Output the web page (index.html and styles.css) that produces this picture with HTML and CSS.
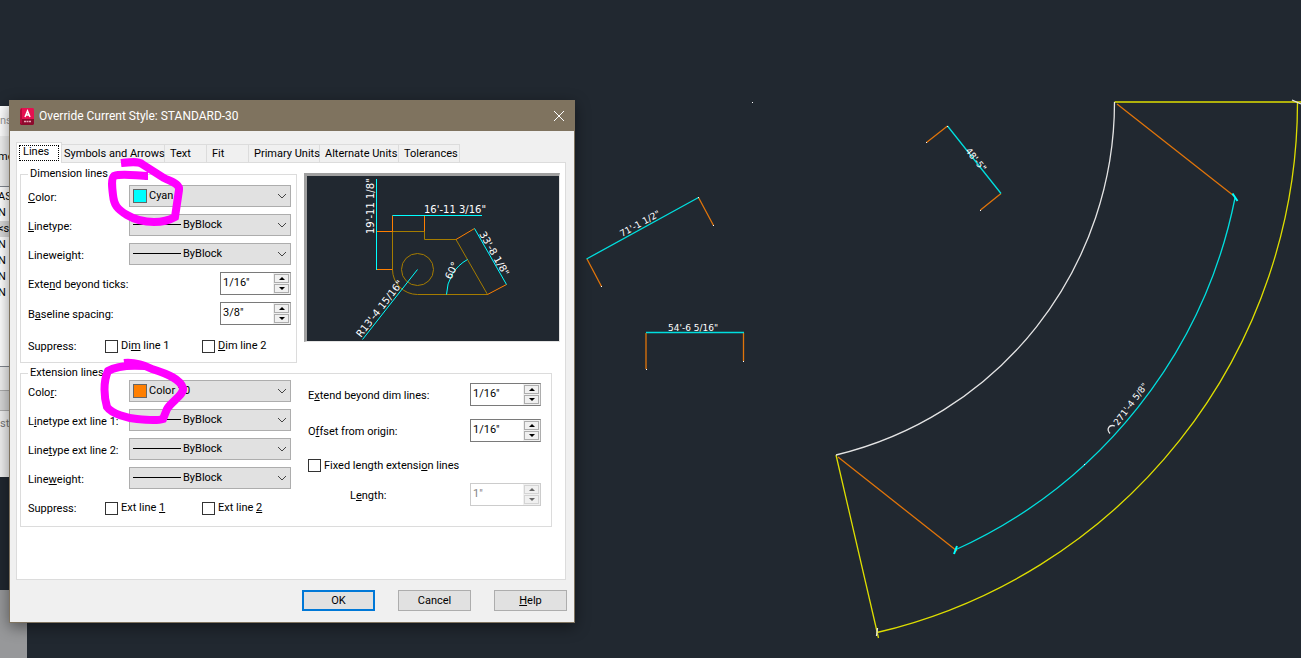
FILE: index.html
```html
<!DOCTYPE html>
<html lang="en">
<head>
  <meta charset="UTF-8">
  <meta name="viewport" content="width=device-width, initial-scale=1.0">
  <title>Override Current Style: STANDARD-30</title>
  <link rel="stylesheet" href="styles.css">
</head>
<body>
  <main class="workspace">
    <!-- Model space drawing -->
    <svg class="drawing" viewBox="0 0 1301 658" preserveAspectRatio="xMinYMin slice">
      <g class="ext">
        <path d="M587 259L601.500 286.500M698.500 197.500L713.500 225.500"/>
        <path d="M646 333V369M743.500 333V361"/>
        <path d="M947.500 126L926.500 142.500M1001 193.500L980.500 210"/>
        <path d="M1117 104L1234 196M838 457L957 551"/>
      </g>
      <g class="dim">
        <path d="M586.500 259L698.500 197.500M646 332.500H744M947.500 126L1001 193.500"/>
        <path d="M1235 198A492 492 0 0 1 955 550"/>
        <path class="tick" d="M1232.500 193.500L1237.500 201M957 546L954 554"/>
      </g>
      <g class="outline">
        <path d="M1114.500 102H1301M1297.500 102A545 545 0 0 1 877 632.500M836 455L878.500 638"/>
      </g>
      <g class="white">
        <path d="M1114.500 102A363 363 0 0 1 836 455"/>
        <path d="M1292 100L1301 104M877.500 628L876.500 636"/>
        <path d="M1110 433.500C1106 429 1109 424 1115 426"/>
      </g>
      <g class="point">
        <path d="M752 102.500h1M601 286.500h1M713 225.500h1M698 197.500h1M646 369.500h1M743 361.500h1M926 142.500h1M947 126.500h1M980 210.500h1M1084 464.500h1"/>
      </g>
      <g class="dim-text">
        <text transform="translate(622 237) rotate(-29)">71'-1 1/2"</text>
        <text x="668" y="331">54'-6 5/16"</text>
        <text transform="translate(965 151) rotate(51)">48'-5"</text>
        <text transform="translate(1118 426) rotate(-53)">271'-4 5/8"</text>
      </g>
    </svg>

    <!-- Dimension style manager, behind the dialog -->
    <section class="manager">
      <div class="manager-title">ns</div>
      <div class="manager-label">me</div>
      <ul class="manager-list">
        <li>AS</li>
        <li>N</li>
        <li class="current">&lt;st</li>
        <li>N</li>
        <li>N</li>
        <li>N</li>
        <li>N</li>
      </ul>
      <div class="manager-scroll"></div>
      <div class="manager-button"></div>
      <div class="manager-note">st</div>
    </section>
    <div class="corner"></div>

    <form class="dialog">
      <header class="titlebar">
        <svg class="logo" width="14" height="17" viewBox="0 0 14 17">
          <path class="logo-face" d="M1 0H13L14 1V11H0V2Z"/>
          <path class="logo-base" d="M0 11H14V16L13 17H1L0 16Z"/>
          <path class="logo-side" d="M0 2L2 0V16L0 15Z"/>
          <path class="logo-mark" d="M5 9L7.500 3L10 9M6 7H9"/>
          <path class="logo-word" d="M4 13.500H11"/>
        </svg>
        <h1>Override Current Style: STANDARD-30</h1>
        <button type="button" class="close" aria-label="Close">
          <svg width="12" height="12" viewBox="0 0 12 12"><path d="M1 1L11 11M11 1L1 11"/></svg>
        </button>
      </header>

      <nav class="tabs">
        <button type="button" class="tab active"><span>Lines</span></button>
        <button type="button" class="tab symbols">Symbols and Arrows</button>
        <button type="button" class="tab short">Text</button>
        <button type="button" class="tab short">Fit</button>
        <button type="button" class="tab primary">Primary Units</button>
        <button type="button" class="tab alternate">Alternate Units</button>
        <button type="button" class="tab tolerances">Tolerances</button>
      </nav>

      <div class="panel">
        <div class="top">
          <fieldset class="dimension">
            <legend>Dimension lines</legend>
            <div class="row">
              <label for="dimColor"><u>C</u>olor:</label>
              <div class="combo color">
                <select id="dimColor"><option>Cyan</option></select>
                <span class="swatch cyan"></span>
                <svg class="arrow" viewBox="0 0 10 6"><path d="M1 1L5 5L9 1"/></svg>
              </div>
            </div>
            <div class="row">
              <label for="dimType"><u>L</u>inetype:</label>
              <div class="combo line">
                <select id="dimType"><option>ByBlock</option></select>
                <svg class="arrow" viewBox="0 0 10 6"><path d="M1 1L5 5L9 1"/></svg>
              </div>
            </div>
            <div class="row">
              <label for="dimWeight">Linewei<u>g</u>ht:</label>
              <div class="combo line">
                <select id="dimWeight"><option>ByBlock</option></select>
                <svg class="arrow" viewBox="0 0 10 6"><path d="M1 1L5 5L9 1"/></svg>
              </div>
            </div>
            <div class="row">
              <label for="ticks">Exte<u>n</u>d beyond ticks:</label>
              <div class="spinner">
                <input type="text" id="ticks" value='1/16"'>
                <div class="steps"><button type="button" class="up" aria-label="Up"></button><button type="button" class="down" aria-label="Down"></button></div>
              </div>
            </div>
            <div class="row">
              <label for="baseline">B<u>a</u>seline spacing:</label>
              <div class="spinner">
                <input type="text" id="baseline" value='3/8"'>
                <div class="steps"><button type="button" class="up" aria-label="Up"></button><button type="button" class="down" aria-label="Down"></button></div>
              </div>
            </div>
            <div class="row suppress">
              <span class="caption">Suppress:</span>
              <label class="check"><input type="checkbox"><span>Di<u>m</u> line 1</span></label>
              <label class="check"><input type="checkbox"><span><u>D</u>im line 2</span></label>
            </div>
          </fieldset>

          <div class="preview">
            <svg viewBox="0 0 252 165">
              <g class="part">
                <path d="M85.500 55.500H117.500V63.500H149L180.500 118.500H110.500A25 25 0 0 1 85.500 93.500Z"/>
                <circle cx="110.500" cy="93.500" r="16"/>
              </g>
              <g class="ext">
                <path d="M70 55.500H85.500M70 93.500H85.500M85.500 39.500V55.500M117.500 39.500V55.500M149 63.500L167.500 52.500M180.500 118.500L199.500 108.500"/>
              </g>
              <g class="dim">
                <path d="M69.500 3V94M85.500 39.500H175M167.500 52.500L199.500 108.500M160.500 83.500A41 41 0 0 0 139.500 118.500M110.500 93.500L55.500 163.500"/>
              </g>
              <g class="dim-text">
                <text transform="translate(67 58) rotate(-90)">19'-11 1/8"</text>
                <text x="117" y="37">16'-11 3/16"</text>
                <text transform="translate(172 58) rotate(60)">33'-8 1/8"</text>
                <text transform="translate(144 104) rotate(-65)">60°</text>
                <text transform="translate(54 162) rotate(-52)">R13'-4 15/16"</text>
              </g>
            </svg>
          </div>
        </div>

        <fieldset class="extension">
          <legend>Extension lines</legend>
          <div class="column">
            <div class="row">
              <label for="extColor">Colo<u>r</u>:</label>
              <div class="combo color">
                <select id="extColor"><option>Color 30</option></select>
                <span class="swatch orange"></span>
                <svg class="arrow" viewBox="0 0 10 6"><path d="M1 1L5 5L9 1"/></svg>
              </div>
            </div>
            <div class="row">
              <label for="extType1">L<u>i</u>netype ext line 1:</label>
              <div class="combo line">
                <select id="extType1"><option>ByBlock</option></select>
                <svg class="arrow" viewBox="0 0 10 6"><path d="M1 1L5 5L9 1"/></svg>
              </div>
            </div>
            <div class="row">
              <label for="extType2">Line<u>t</u>ype ext line 2:</label>
              <div class="combo line">
                <select id="extType2"><option>ByBlock</option></select>
                <svg class="arrow" viewBox="0 0 10 6"><path d="M1 1L5 5L9 1"/></svg>
              </div>
            </div>
            <div class="row">
              <label for="extWeight">Line<u>w</u>eight:</label>
              <div class="combo line">
                <select id="extWeight"><option>ByBlock</option></select>
                <svg class="arrow" viewBox="0 0 10 6"><path d="M1 1L5 5L9 1"/></svg>
              </div>
            </div>
            <div class="row suppress">
              <span class="caption">Suppress:</span>
              <label class="check"><input type="checkbox"><span>Ext line <u>1</u></span></label>
              <label class="check"><input type="checkbox"><span>Ext line <u>2</u></span></label>
            </div>
          </div>

          <div class="column offsets">
            <div class="row">
              <label for="beyond">E<u>x</u>tend beyond dim lines:</label>
              <div class="spinner">
                <input type="text" id="beyond" value='1/16"'>
                <div class="steps"><button type="button" class="up" aria-label="Up"></button><button type="button" class="down" aria-label="Down"></button></div>
              </div>
            </div>
            <div class="row">
              <label for="origin">O<u>f</u>fset from origin:</label>
              <div class="spinner">
                <input type="text" id="origin" value='1/16"'>
                <div class="steps"><button type="button" class="up" aria-label="Up"></button><button type="button" class="down" aria-label="Down"></button></div>
              </div>
            </div>
            <div class="row fixed">
              <label class="check"><input type="checkbox"><span>Fixed length extensi<u>o</u>n lines</span></label>
            </div>
            <div class="row length">
              <label for="length">L<u>e</u>ngth:</label>
              <div class="spinner disabled">
                <input type="text" id="length" value='1"' disabled>
                <div class="steps"><button type="button" class="up" aria-label="Up" disabled></button><button type="button" class="down" aria-label="Down" disabled></button></div>
              </div>
            </div>
          </div>
        </fieldset>
      </div>

      <footer class="actions">
        <button type="submit" class="default">OK</button>
        <button type="button">Cancel</button>
        <button type="button"><u>H</u>elp</button>
      </footer>
    </form>

    <!-- Marker strokes over the two colour fields -->
    <svg class="marker" width="220" height="440" viewBox="0 0 220 440">
      <path d="M121 163C130 162 138 161 142 164L164 178C172 182 180 184 179 190L175 217C168 221 162 222 154 222C142 222 132 218 127 215C117 209 114 205 113 195C112 187 111 179 114 176C122 173 137 176 148 176"/>
      <path d="M124 363C135 362 144 365 152 369C168 374 180 379 183 388C184 395 172 401 167 409L163 419C157 421 146 420 137 419C127 418 112 414 107 407C104 397 103 382 108 371C116 366 130 365 145 366"/>
    </svg>
  </main>
</body>
</html>
```
FILE: styles.css
```css
* {
  box-sizing: border-box;
}
body {
  margin: 0;
  font-family: Roboto, "Liberation Sans", sans-serif;
  font-size: 11px;
  line-height: 14px;
  color: #000;
  background-color: #212830;
}
button,
input,
select {
  font: inherit;
  color: inherit;
  margin: 0;
  padding: 0;
}
.workspace {
  position: relative;
  min-height: 100vh;
  overflow: hidden;
}

/* Drawing */
.drawing {
  position: absolute;
  width: 100%;
  height: 100%;
}
svg path,
svg circle {
  fill: none;
}
.ext {
  stroke: #e0740a;
}
.dim {
  stroke: #00dede;
}
.dim .tick {
  stroke: #00ffff;
  stroke-width: 2;
}
.outline {
  stroke: #dede00;
}
.white {
  stroke: #e4e4e4;
}
.drawing .ext,
.drawing .dim,
.drawing .outline,
.drawing .white {
  stroke-width: 1.3;
}
.point {
  stroke: #fff;
}
.dim-text {
  font-family: "DejaVu Sans", sans-serif;
  font-size: 9px;
  fill: #fff;
}

/* Window behind */
.manager {
  position: absolute;
  top: 106px;
  left: 0;
  width: 40px;
  height: 371px;
  background: #f0f0f0;
}
.manager-title {
  height: 30px;
  line-height: 30px;
  background: #fff;
  color: #999;
}
.manager-label {
  height: 50px;
  line-height: 42px;
  text-indent: -2px;
}
.manager-list {
  height: 181px;
  margin: 0;
  padding: 2px 0;
  list-style: none;
  text-indent: -2px;
  background: #fff;
  border-top: 1px solid #828790;
  border-bottom: 1px solid #828790;
}
.manager-list li {
  height: 16px;
  line-height: 16px;
}
.manager-list .current {
  background: #d9d9d9;
}
.manager-scroll {
  height: 24px;
  border-bottom: 1px solid #adadad;
}
.manager-button {
  height: 20px;
  background: #d8d8d8;
  border-bottom: 1px solid #adadad;
}
.manager-note {
  line-height: 26px;
  color: #777;
}
.corner {
  position: absolute;
  left: 0;
  bottom: 0;
  width: 27px;
  height: 68px;
  background: #97989a;
}

/* Dialog */
.dialog {
  position: absolute;
  top: 100px;
  left: 9px;
  width: 566px;
  background: #f0f0f0;
  border: 1px solid #7f735f;
  box-shadow: 0 4px 14px rgba(0, 0, 0, 0.45);
}
.titlebar {
  display: flex;
  align-items: center;
  height: 30px;
  padding: 0 8px 0 10px;
  background: #7f735f;
  color: #fff;
}
.titlebar h1 {
  flex: 1;
  margin: 0 0 0 5px;
  font-size: 12px;
  font-weight: normal;
}
.logo .logo-face {
  fill: #e51050;
}
.logo .logo-base {
  fill: #8c0a2c;
}
.logo .logo-side {
  fill: #b30b3b;
}
.logo-mark {
  stroke: #fff;
  stroke-width: 1.5;
}
.logo-word {
  stroke: #e9a9bb;
  stroke-width: 1.5;
  stroke-dasharray: 2 0.5;
}
.close {
  width: 14px;
  height: 14px;
  border: none;
  background: none;
}
.close svg {
  display: block;
  margin: 0 auto;
  stroke: #fff;
}

/* Tabs */
.tabs {
  display: flex;
  align-items: flex-end;
  height: 31px;
  padding-left: 6px;
}
.tab {
  height: 18px;
  padding: 0 0 0 5px;
  text-align: left;
  white-space: nowrap;
  background: #f0f0f0;
  border: 1px solid #dcdcdc;
  border-left: none;
  border-bottom: none;
}
.tab.active {
  position: relative;
  width: 46px;
  height: 21px;
  margin-bottom: -1px;
  padding: 1px 2px 2px;
  background: #fff;
  border-left: 1px solid #dcdcdc;
}
.tab.active span {
  display: block;
  height: 16px;
  padding-left: 3px;
  line-height: 12px;
  border: 1px dotted #000;
}
.tab.symbols {
  width: 103px;
  padding-left: 2px;
}
.short {
  width: 42px;
}
.primary {
  width: 71px;
}
.alternate {
  width: 79px;
}
.tolerances {
  width: 61px;
}
.panel {
  height: 418px;
  margin: 0 8px 0 6px;
  padding: 4px 5px 0 3px;
  background: #fff;
  border: 1px solid #dcdcdc;
}
.top {
  display: flex;
  gap: 7px;
}

/* Groups */
fieldset {
  min-width: 0;
  margin: 0;
  padding: 0 5px 6px 7px;
  border: 1px solid #dcdcdc;
}
legend {
  padding: 0 2px;
}
.dimension {
  flex: none;
  width: 277px;
  padding-top: 4px;
  padding-bottom: 2px;
}
.extension {
  display: flex;
  gap: 17px;
  margin-top: 3px;
  margin-right: 8px;
}
.dimension .row,
.column .row {
  margin-bottom: 7px;
}
.row {
  display: flex;
  justify-content: space-between;
}
.row > label,
.caption {
  padding-top: 6px;
  white-space: nowrap;
}
.column {
  width: 263px;
}
.dimension .suppress,
.column .suppress {
  justify-content: flex-start;
  margin-bottom: 0;
}
.suppress {
  align-items: center;
  height: 24px;
}
.dimension .suppress {
  height: 28px;
}
.suppress .caption {
  flex: none;
  width: 77px;
  padding-top: 2px;
}
.row > .check {
  display: flex;
  align-items: center;
  gap: 3px;
  padding: 0;
}
.suppress .check {
  flex: none;
  width: 97px;
}
.suppress .check:last-child {
  width: 89px;
}
.check input {
  appearance: none;
  width: 13px;
  height: 13px;
  background: #fff;
  border: 1px solid #333;
}
.column.offsets {
  width: 233px;
  padding-top: 3px;
}
.column.offsets .row {
  margin-bottom: 13px;
}
.column.offsets .fixed {
  height: 21px;
  margin-bottom: 7px;
}
.column.offsets .length {
  margin-bottom: 0;
  padding-left: 42px;
}

/* Drop-downs */
.combo {
  position: relative;
  width: 162px;
  height: 22px;
}
.combo select {
  appearance: none;
  display: block;
  width: 100%;
  height: 22px;
  background: #e1e1e1;
  border: 1px solid #adadad;
  border-radius: 0;
}
.color select {
  padding-left: 19px;
}
.line select {
  padding-left: 53px;
  background: linear-gradient(#000, #000) 3px 9px / 48px 1px no-repeat #e1e1e1;
}
.swatch {
  position: absolute;
  top: 4px;
  left: 4px;
  width: 14px;
  height: 14px;
  border: 1px solid #666;
}
.cyan {
  background: #00ffff;
}
.orange {
  background: #ff7f00;
}
.arrow {
  position: absolute;
  top: 8px;
  right: 4px;
  width: 10px;
  height: 6px;
  stroke: #444;
  pointer-events: none;
}

/* Spinners */
.spinner {
  display: flex;
  width: 71px;
  height: 23px;
  background: #fff;
  border: 1px solid #7a7a7a;
  border-right-color: #adadad;
}
.spinner input {
  flex: 1;
  min-width: 0;
  height: 18px;
  padding-left: 2px;
  background: none;
  border: none;
}
.steps {
  display: flex;
  flex-direction: column;
  gap: 1px;
  width: 17px;
  padding: 1px;
  background: #f0f0f0;
}
.steps button {
  display: flex;
  justify-content: center;
  align-items: center;
  flex: 1;
  background: #f0f0f0;
  border: 1px solid #adadad;
}
.steps button::before {
  content: "";
  border: 3px solid transparent;
}
.steps .up::before {
  border-top: none;
  border-bottom-color: #000;
}
.steps .down::before {
  border-bottom: none;
  border-top-color: #000;
}
.disabled {
  border-color: #ccc;
  color: #838383;
}
.disabled .steps button {
  border-color: #d4d4d4;
}
.disabled .up::before {
  border-bottom-color: #666;
}
.disabled .down::before {
  border-top-color: #666;
}

/* Style preview */
.preview {
  flex: none;
  width: 256px;
  height: 169px;
  margin-top: 6px;
  background: #212830;
  border: 3px solid #a0a0a0;
  border-right: 1px solid #e3e3e3;
  border-bottom: 1px solid #e3e3e3;
}
.preview svg {
  display: block;
  width: 100%;
}
.preview .part {
  stroke: #a57c00;
}
.preview .ext {
  stroke: #ff7f00;
}
.preview .dim {
  stroke: #00ffff;
}
.preview .dim-text {
  font-size: 10px;
}

.actions {
  display: flex;
  justify-content: flex-end;
  gap: 23px;
  padding: 10px 7px 11px;
}
.actions button {
  width: 73px;
  height: 21px;
  background: #e1e1e1;
  border: 1px solid #adadad;
}
.actions .default {
  border: 2px solid #0078d7;
}

.marker {
  position: absolute;
  top: 0;
  left: 0;
  stroke: #ff00ff;
  stroke-width: 8;
  pointer-events: none;
}
```
